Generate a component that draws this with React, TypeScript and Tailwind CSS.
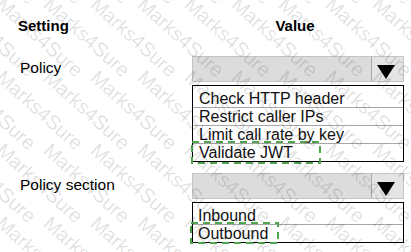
import React from 'react';

const Select = () => (
  <div className="flex h-[26px] border border-[#c4c4c4] bg-[#dcdcdc]">
    <div className="flex-1" />
    <div className="flex w-[32px] items-center justify-center border-l border-[#a8a8a8] bg-[#e4e4e4] pt-[6px] pr-[3px]">
      <svg width="18" height="14" viewBox="0 0 18 14">
        <polygon points="0,0 18,0 9,14" fill="#000" />
      </svg>
    </div>
  </div>
);

const Dashed = ({ w, h }: { w: number; h: number }) => (
  <svg width={w} height={h} className="block">
    <rect x="1" y="1" width={w - 2} height={h - 2} fill="none" stroke="#4fa64f" strokeWidth="2" strokeDasharray="7 5" />
  </svg>
);

const policies = ['Check HTTP header', 'Restrict caller IPs', 'Limit call rate by key', 'Validate JWT'];
const sections = ['Inbound', 'Outbound'];

export default function App() {
  return (
    <div className="relative h-[252px] w-[411px] overflow-hidden bg-white text-black font-['Liberation_Sans',Arial,sans-serif]">
      <div className="flex pt-[17px] text-[15px] font-bold leading-[18px]">
        <div className="w-[192px] pl-[18px]">Setting</div>
        <div className="w-[212px] pr-[6px] text-center">Value</div>
      </div>

      <div className="mt-[21px] flex">
        <div className="w-[192px] pl-[20px] pt-[3px] text-[15.5px] leading-[18px]">Policy</div>
        <div className="w-[212px]">
          <Select />
          <div className="relative mt-[3px] border border-black pt-[4px] text-[16px] leading-[17px] text-[#111]">
            {policies.map((p, i) => (
              <div key={p} className={i < policies.length - 1 ? 'border-b border-[#a6a6a6] pl-[6px]' : 'pl-[6px]'}>
                {p}
              </div>
            ))}
            <div className="absolute left-[-2px] top-[55px]">
              <Dashed w={130} h={23} />
            </div>
          </div>
        </div>
      </div>

      <div className="mt-[11px] flex">
        <div className="w-[192px] pl-[20px] pt-[3px] text-[15.5px] leading-[18px]">Policy section</div>
        <div className="w-[212px]">
          <Select />
          <div className="relative mt-[3px] border border-black pt-[4px] text-[16px] leading-[17px] text-[#111]">
            {sections.map((s, i) => (
              <div key={s} className={i === 0 ? 'border-b border-[#a6a6a6] pl-[5px]' : 'pl-[5px]'}>
                {s}
              </div>
            ))}
            <div className="absolute left-[-3px] top-[19px]">
              <Dashed w={89} h={22} />
            </div>
          </div>
        </div>
      </div>

      {/* watermark */}
      <div className="pointer-events-none absolute left-[-31px] top-[-73px] grid grid-cols-[repeat(11,47px)] auto-rows-[73px]">
        {Array.from({ length: 55 }).map((_, i) => (
          <div key={i} className="flex items-center justify-center">
            <span className="rotate-[42deg] whitespace-nowrap text-[20px] text-[rgba(0,0,0,0.12)]">Marks4Sure</span>
          </div>
        ))}
      </div>
    </div>
  );
}
